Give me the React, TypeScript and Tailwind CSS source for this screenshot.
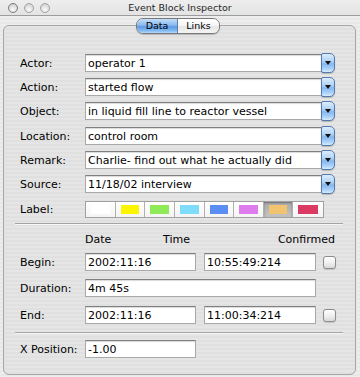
import React from 'react';

const stripes =
  'bg-[repeating-linear-gradient(180deg,#ededed_0px,#ededed_2px,#e8e8e8_2px,#e8e8e8_4px)]';
const panelStripes =
  'bg-[repeating-linear-gradient(180deg,#e5e5e5_0px,#e5e5e5_2px,#e0e0e0_2px,#e0e0e0_4px)]';

type FieldProps = { value?: string; className?: string };

const Field: React.FC<FieldProps> = ({ value = '', className = '' }) => (
  <div
    className={`h-[18px] shrink-0 bg-white border border-[#a9a9a9] border-t-[#7f7f7f] shadow-[inset_0_1px_1px_rgba(0,0,0,0.15)] pl-[2px] flex items-center text-[11px] text-black whitespace-nowrap overflow-hidden ${className}`}
  >
    {value}
  </div>
);

const Combo: React.FC<{ value: string }> = ({ value }) => (
  <div className="flex items-center h-[18px]">
    <Field value={value} className="w-[237px]" />
    <div className="-ml-[1px] w-[14px] h-[20px] shrink-0 rounded-r-[5px] rounded-l-[2px] border border-[#5679ae] bg-[linear-gradient(180deg,#dcecfc_0%,#b1d2f6_40%,#86b7ee_55%,#a6cff8_80%,#d4ebfd_100%)] shadow-[0_1px_1px_rgba(0,0,0,0.2)] flex items-center justify-center">
      <svg width="6" height="4" viewBox="0 0 6 4">
        <path d="M0 0H6L3 4Z" fill="#111" />
      </svg>
    </div>
  </div>
);

const Row: React.FC<{ label: string; className?: string; children: React.ReactNode }> = ({
  label,
  className = '',
  children,
}) => (
  <div className={`flex items-center h-[18px] ${className}`}>
    <div className="w-[65px] shrink-0 text-[11px] text-black whitespace-nowrap">{label}</div>
    {children}
  </div>
);

const Checkbox = () => (
  <div className="ml-[7px] w-[13px] h-[13px] shrink-0 rounded-[3px] border border-[#8c8c8c] bg-[linear-gradient(180deg,#ffffff_0%,#f0f0f0_50%,#d9d9d9_100%)] shadow-[0_1px_1px_rgba(0,0,0,0.15)]" />
);

const Separator: React.FC<{ className?: string }> = ({ className = '' }) => (
  <div className={`ml-[11px] mr-[12px] h-[2px] border-t border-[#a4a4a4] border-b border-b-[#f6f6f6] ${className}`} />
);

const swatches = ['#ffffff', '#fbf500', '#8eea57', '#80dcfb', '#5b8ef3', '#de7ced', '#f3c46f', '#db3a63'];

export default function App() {
  return (
    <div
      className={`w-[360px] h-[377px] overflow-hidden ${stripes} font-['DejaVu_Sans',sans-serif] leading-none text-black`}
    >
      {/* Title bar */}
      <div className="h-[16px] grid grid-cols-[1fr_auto_1fr] items-center border-b border-[#9c9c9c] bg-[linear-gradient(180deg,#eeeeee_0%,#e3e3e3_100%)]">
        <div className="flex items-center gap-[6px] pl-[8px]">
          {[0, 1, 2].map((i) => (
            <div
              key={i}
              className={`w-[10px] h-[10px] rounded-full border ${
                i === 0 ? 'border-[#7a7a7a]' : 'border-[#a3a3a3]'
              } bg-[radial-gradient(circle_at_50%_70%,#fbfbfb_0%,#dcdcdc_60%,#c4c4c4_100%)]`}
            />
          ))}
        </div>
        <div className="text-[9.5px] text-[#262626] whitespace-nowrap">Event Block Inspector</div>
        <div />
      </div>

      {/* Tabs */}
      <div className="relative z-10 mt-[2px] pl-[136px] flex">
        <div className="flex h-[16px] rounded-[7px] border border-[#787878] overflow-hidden shadow-[0_1px_1px_rgba(0,0,0,0.2)] text-[9.5px]">
          <div className="w-[41px] flex items-center justify-center border-r border-[#5d7fae] bg-[linear-gradient(180deg,#c4def9_0%,#8ab8ee_45%,#5f9ae4_55%,#84bdf4_85%,#b6dafc_100%)]">
            Data
          </div>
          <div className="w-[41px] flex items-center justify-center bg-[linear-gradient(180deg,#ffffff_0%,#f6f6f6_45%,#e6e6e6_55%,#f4f4f4_100%)]">
            Links
          </div>
        </div>
      </div>

      {/* Panel */}
      <div
        className={`-mt-[9px] ml-[3px] w-[353px] h-[350px] rounded-[6px] border border-[#a6a6a6] ${panelStripes} pt-[28px] flex flex-col`}
      >
        <div className="pl-[16px] flex flex-col">
          <Row label="Actor:">
            <Combo value="operator 1" />
          </Row>
          <Row label="Action:" className="mt-[6px]">
            <Combo value="started flow" />
          </Row>
          <Row label="Object:" className="mt-[6px]">
            <Combo value="in liquid fill line to reactor vessel" />
          </Row>
          <Row label="Location:" className="mt-[7px]">
            <Combo value="control room" />
          </Row>
          <Row label="Remark:" className="mt-[6px]">
            <Combo value="Charlie- find out what he actually did" />
          </Row>
          <Row label="Source:" className="mt-[6px]">
            <Combo value="11/18/02 interview" />
          </Row>
          <div className="mt-[8px] flex items-center h-[17px]">
            <div className="w-[65px] shrink-0 text-[11px]">Label:</div>
            <div className="w-[239px] h-[17px] grid grid-cols-8 border border-[#a0a0a0] bg-white">
              {swatches.map((c, i) => (
                <div
                  key={c}
                  className={`flex px-[5px] py-[3px] ${i < 7 ? 'border-r border-[#b0b0b0]' : ''} ${
                    i === 6
                      ? 'bg-[linear-gradient(180deg,#a9a9a9_0%,#c4c4c4_100%)] shadow-[inset_0_1px_2px_rgba(0,0,0,0.35)]'
                      : 'bg-[linear-gradient(180deg,#ffffff_0%,#f4f4f4_100%)]'
                  }`}
                >
                  <div className="flex-1" style={{ backgroundColor: c }} />
                </div>
              ))}
            </div>
          </div>
        </div>

        <Separator className="mt-[5px]" />

        <div className="pl-[16px] flex flex-col">
          <div className="mt-[7px] h-[14px] flex items-center text-[11px] pr-[20px]">
            <div className="w-[65px] shrink-0" />
            <div className="w-[78px] shrink-0">Date</div>
            <div>Time</div>
            <div className="flex-1" />
            <div>Confirmed</div>
          </div>
          <Row label="Begin:" className="mt-[7px]">
            <Field value="2002:11:16" className="w-[111px]" />
            <Field value="10:55:49:214" className="ml-[8px] w-[112px]" />
            <Checkbox />
          </Row>
          <Row label="Duration:" className="mt-[8px]">
            <Field value="4m 45s" className="w-[231px]" />
          </Row>
          <Row label="End:" className="mt-[9px]">
            <Field value="2002:11:16" className="w-[111px]" />
            <Field value="11:00:34:214" className="ml-[8px] w-[112px]" />
            <Checkbox />
          </Row>
        </div>

        <Separator className="mt-[8px]" />

        <div className="pl-[16px] flex flex-col">
          <Row label="X Position:" className="mt-[6px]">
            <Field value="-1.00" className="w-[111px]" />
          </Row>
        </div>
      </div>
    </div>
  );
}
